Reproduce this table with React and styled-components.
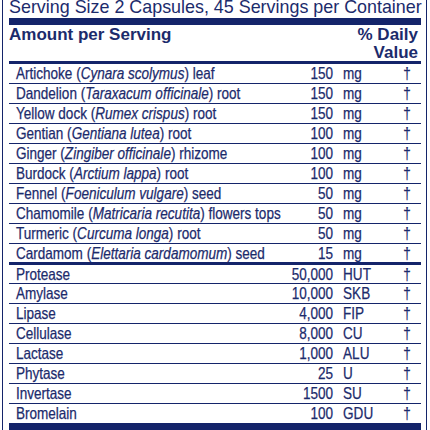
import React from "react";
import styled, { createGlobalStyle } from "styled-components";

const NAVY = "#14246a";
const INK = "#1c2b6c";
// no narrow face is installed, so row text is drawn in Liberation Sans and squeezed
const SQUEEZE = 0.82;

const herbs = [
  ["Artichoke", "Cynara scolymus", "leaf", "150", "mg"],
  ["Dandelion", "Taraxacum officinale", "root", "150", "mg"],
  ["Yellow dock", "Rumex crispus", "root", "150", "mg"],
  ["Gentian", "Gentiana lutea", "root", "100", "mg"],
  ["Ginger", "Zingiber officinale", "rhizome", "100", "mg"],
  ["Burdock", "Arctium lappa", "root", "100", "mg"],
  ["Fennel", "Foeniculum vulgare", "seed", "50", "mg"],
  ["Chamomile", "Matricaria recutita", "flowers tops", "50", "mg"],
  ["Turmeric", "Curcuma longa", "root", "50", "mg"],
  ["Cardamom", "Elettaria cardamomum", "seed", "15", "mg"],
];

const enzymes = [
  ["Protease", "50,000", "HUT"],
  ["Amylase", "10,000", "SKB"],
  ["Lipase", "4,000", "FIP"],
  ["Cellulase", "8,000", "CU"],
  ["Lactase", "1,000", "ALU"],
  ["Phytase", "25", "U"],
  ["Invertase", "1500", "SU"],
  ["Bromelain", "100", "GDU"],
];

const GlobalStyle = createGlobalStyle`
  body {
    margin: 0;
    background: #fff;
  }
`;

const Label = styled.div`
  box-sizing: border-box;
  width: 425px;
  height: 430px;
  margin-left: 2px;
  padding: 0 5px 0 6px;
  border-left: 1px solid ${NAVY};
  border-right: 1px solid ${NAVY};
  overflow: hidden;
  color: ${INK};
  font-family: "Liberation Sans", Arial, sans-serif;
`;

const ServingSize = styled.div`
  height: 18px;
  font-size: 17.9px;
  line-height: 14px;
  white-space: nowrap;
`;

const Bar = styled.div`
  height: ${(p) => p.$h}px;
  background: ${NAVY};
`;

const Header = styled.div`
  display: flex;
  justify-content: space-between;
  box-sizing: border-box;
  height: 36px;
  padding: 1px 3px 0 0;
  font-size: 17px;
  font-weight: bold;
  line-height: 17.6px;
`;

const DailyValue = styled.div`
  text-align: right;
`;

const Row = styled.div`
  height: ${(p) => p.$h}px;
  border-bottom: ${(p) => p.$line}px solid ${NAVY};
`;

const Cells = styled.div`
  display: grid;
  grid-template-columns: 1fr max-content 66px 24px;
  box-sizing: border-box;
  width: ${412 / SQUEEZE}px;
  padding: 0 5px 0 8.5px;
  transform: scaleX(${SQUEEZE});
  transform-origin: left top;
  font-size: 16.5px;
  line-height: ${(p) => p.$lh}px;
  white-space: nowrap;
  -webkit-text-stroke: 0.25px ${INK};
`;

const Name = styled.span`
  i {
    font-style: italic;
  }
`;

const Amount = styled.span`
  padding-right: 12.2px;
  text-align: right;
`;

const Dagger = styled.span`
  text-align: center;
`;

export default function App() {
  return (
    <>
      <GlobalStyle />
      <Label>
        <ServingSize>Serving Size 2 Capsules, 45 Servings per Container</ServingSize>
        <Bar $h={7} />
        <Header>
          <span>Amount per Serving</span>
          <DailyValue>
            % Daily
            <br />
            Value
          </DailyValue>
        </Header>
        <Bar $h={3} />
        {herbs.map(([common, latin, part, amt, unit], i) => {
          const last = i === herbs.length - 1;
          return (
            <Row key={common} $h={last ? 18 : 19} $line={last ? 3 : 1}>
              <Cells $lh={19.5}>
                <Name>
                  {common} (<i>{latin}</i>) {part}
                </Name>
                <Amount>{amt}</Amount>
                <span>{unit}</span>
                <Dagger>†</Dagger>
              </Cells>
            </Row>
          );
        })}
        {enzymes.map(([name, amt, unit], i) => {
          const last = i === enzymes.length - 1;
          return (
            <Row key={name} $h={i === 0 ? 18 : 19} $line={last ? 0 : 1}>
              <Cells $lh={18.5}>
                <Name>{name}</Name>
                <Amount>{amt}</Amount>
                <span>{unit}</span>
                <Dagger>†</Dagger>
              </Cells>
            </Row>
          );
        })}
        <Bar $h={10} />
      </Label>
    </>
  );
}
